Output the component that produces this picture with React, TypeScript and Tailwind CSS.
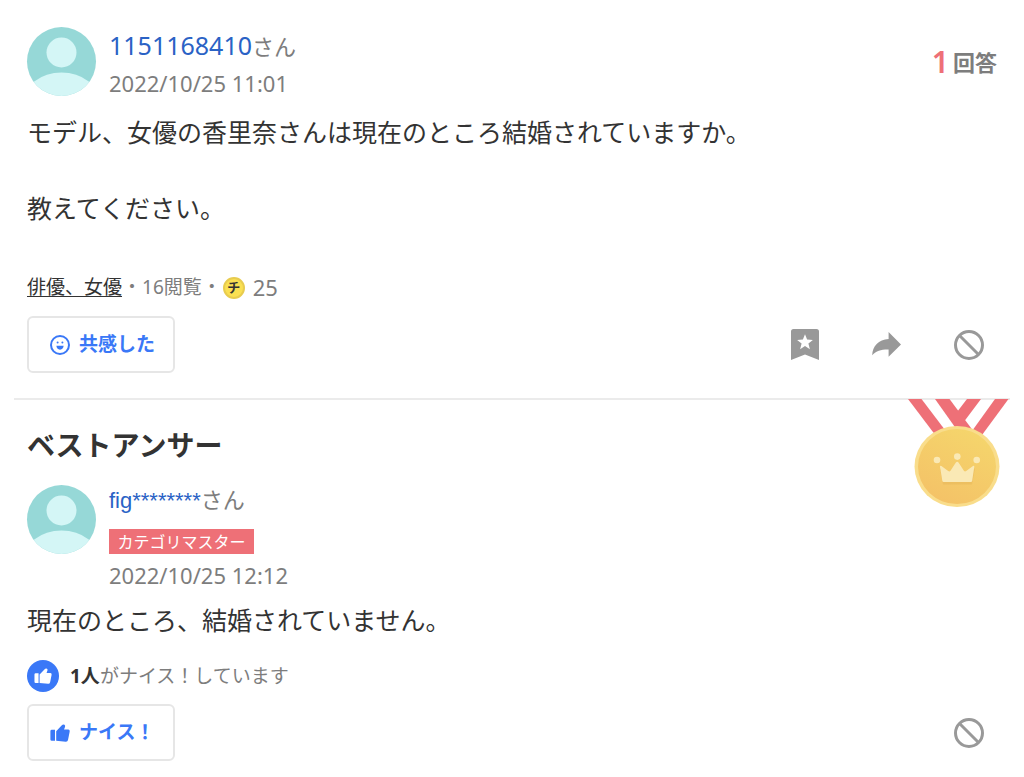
import type { ReactNode } from "react";

const question = {
  user: "1151168410",
  date: "2022/10/25 11:01",
  text: "モデル、女優の香里奈さんは現在のところ結婚されていますか。\n\n教えてください。",
  category: "俳優、女優",
  coins: 25,
};

const answer = {
  user: "fig********",
  badge: "カテゴリマスター",
  date: "2022/10/25 12:12",
  text: "現在のところ、結婚されていません。",
};

function Avatar() {
  return (
    <svg viewBox="0 0 69 69" className="size-[69px] shrink-0 rounded-full bg-[#96d8d7]" fill="#d4f6f6" aria-hidden="true">
      <circle cx="34.5" cy="25.5" r="15" />
      <ellipse cx="34.5" cy="75" rx="38" ry="29.5" />
    </svg>
  );
}

function SmileIcon() {
  return (
    <svg viewBox="0 0 20 20" className="size-5" aria-hidden="true">
      <circle cx="10" cy="10" r="9" fill="none" stroke="currentColor" strokeWidth="2" />
      <circle cx="7.6" cy="7.4" r="1" fill="currentColor" />
      <circle cx="12.4" cy="7.4" r="1" fill="currentColor" />
      <path d="M6.4 10.8h7.2c0 2.2-1.5 3.9-3.6 3.9s-3.6-1.7-3.6-3.9z" fill="currentColor" />
    </svg>
  );
}

function ThumbIcon({ className }: { className: string }) {
  return (
    <svg viewBox="0 0 20 18" className={className} fill="currentColor" aria-hidden="true">
      <path d="M1.8 5.8H5v11H1.8Q.4 16.8.4 15.4V7.2q0-1.4 1.4-1.4z" />
      <path d="M6.2 7.2 11.6 1.6Q13 0 14.5.8q1 .7.5 2.1l-1 2.6h4.3q1.7.2 1.4 2l-1.7 8.5q-.4 1.8-2.2 1.7L6.2 16.8z" />
    </svg>
  );
}

function BookmarkIcon() {
  return (
    <svg viewBox="0 0 28 31" className="h-[31px] w-7" aria-hidden="true">
      <path d="M2.5 0h23Q28 0 28 2.5V31l-14-5.5L0 31V2.5Q0 0 2.5 0z" fill="currentColor" />
      <path d="m14 5.2 2.1 5.4 5.8.3-4.5 3.7 1.5 5.6-4.9-3.2-4.9 3.2 1.5-5.6-4.5-3.7 5.8-.3z" fill="#fff" />
    </svg>
  );
}

function ShareIcon() {
  return (
    <svg viewBox="0 0 29 25" className="h-[25px] w-[29px]" fill="currentColor" aria-hidden="true">
      <path d="M16.6 0 29 12.4 16.6 24.8v-7.4C9.6 17.2 4.4 18.6.2 23.2.4 14 6.6 7.4 16.6 6.9z" />
    </svg>
  );
}

function BanIcon() {
  return (
    <svg viewBox="0 0 30 30" className="size-[30px]" fill="none" stroke="currentColor" strokeWidth="3" aria-hidden="true">
      <circle cx="15" cy="15" r="13.5" />
      <path d="m5.5 5.5 19 19" />
    </svg>
  );
}

function Medal() {
  return (
    <svg viewBox="0 0 102 109" className="absolute -top-px right-px h-[109px] w-[102px]" aria-hidden="true">
      <defs>
        <linearGradient id="gold" x1="0.8" y1="0" x2="0.3" y2="1">
          <stop offset="0" stopColor="#f5d66c" />
          <stop offset="1" stopColor="#f4c267" />
        </linearGradient>
      </defs>
      <g fill="#ee7077">
        <path d="M1 0h13.5L38 31l-9 6z" />
        <path d="M60 0h14L57.5 22 50 13z" />
        <path d="M28 0h14.5L67 33l-17-2z" />
        <path d="M88 0h13.5L75 36l-10-4z" />
      </g>
      <ellipse cx="50" cy="67.5" rx="42.5" ry="40.5" fill="#f9dd8b" />
      <ellipse cx="50" cy="67.5" rx="39" ry="37.5" fill="url(#gold)" />
      <path d="M33 69.5 43 75l7-9.5 7.5 9.500L68 69.500l-3 16H36z" fill="#e5b357" opacity=".45" />
      <g fill="#fae9b5">
        <path d="M33 67.8q.1-1.6 1.4-.7l6.8 5q1.400 1 2.300-.4l5.200-8q1.500-2 3 0l5.200 8q.9 1.400 2.300.4l6.800-5q1.400-.8 1.300.7l-2.100 14q-.2 1.200-1.400 1.200H36.700q-1.200 0-1.400-1.200z" />
        <circle cx="30" cy="61" r="3.3" />
        <circle cx="50.3" cy="57.6" r="3.3" />
        <circle cx="69.7" cy="61" r="3.3" />
      </g>
    </svg>
  );
}

function OutlineButton({ children }: { children: ReactNode }) {
  return (
    <button
      type="button"
      className="flex h-[57px] w-[148px] items-center gap-[9px] rounded-md border-2 border-[#e6e6e6] bg-white pl-[21px] text-[19px] font-bold text-[#3a78f7] hover:bg-gray-50"
    >
      {children}
    </button>
  );
}

export default function App() {
  return (
    <main
      lang="ja"
      className="bg-white px-[14px] pb-4 font-['Noto_Sans','Noto_Sans_CJK_JP',sans-serif] text-[#333333]"
    >
      <article className="px-[13px] pt-[27px] pb-[25px]">
        <header className="flex items-start gap-[13px]">
          <Avatar />
          <div className="flex-1 text-[#7d7d7d]">
            <p className="text-[22px] leading-[37px]">
              <a href="#user" className="text-[25px] text-[#2a62c5]">{question.user}</a>
              さん
            </p>
            <p className="text-[22px] leading-[37px]">{question.date}</p>
          </div>
          <p className="mt-4 flex items-center gap-1 text-[22px] leading-[38px] font-bold text-[#7d7d7d]">
            <span className="text-[30px] font-semibold text-[#ee7077]">1</span>
            回答
          </p>
        </header>

        <p className="mt-[11px] text-[25px] leading-[38px] whitespace-pre-line">{question.text}</p>

        <div className="mt-12 flex h-[25px] items-center text-[19px] text-[#7d7d7d]">
          <a href="#category" className="text-[#333333] underline underline-offset-2">{question.category}</a>
          <span className="w-5 text-center">・</span>
          <span>16閲覧</span>
          <span className="w-5 text-center">・</span>
          <span className="ml-px flex size-[22px] items-center justify-center rounded-full border-2 border-[#e8cc4f] bg-[#fae052] text-[13px] leading-none font-bold text-[#333333]">
            チ
          </span>
          <span className="ml-2 text-[22px]">{question.coins}</span>
        </div>

        <div className="mt-4 flex items-center justify-between">
          <OutlineButton>
            <SmileIcon />
            共感した
          </OutlineButton>
          <div className="flex items-center gap-[53px] pr-[13px] text-[#999999]">
            <button type="button" aria-label="知恵コレクションに追加">
              <BookmarkIcon />
            </button>
            <button type="button" aria-label="共有">
              <ShareIcon />
            </button>
            <button type="button" aria-label="違反報告">
              <BanIcon />
            </button>
          </div>
        </div>
      </article>

      <article className="relative border-t-2 border-[#ebebeb] px-[13px] pt-[26px]">
        <Medal />
        <h2 className="text-[28px] leading-[38px] font-bold">ベストアンサー</h2>

        <header className="mt-[21px] flex items-start gap-[13px]">
          <Avatar />
          <div className="text-[#7d7d7d]">
            <p className="text-[22px] leading-[28px]">
              <a href="#user" className="font-['Liberation_Sans',sans-serif] text-[#2a62c5]">{answer.user}</a>
              さん
            </p>
            <p className="mt-[14px] flex h-[25px] w-[145px] items-center justify-center bg-[#ee7077] text-[16px] text-white">
              {answer.badge}
            </p>
            <p className="mt-[7px] text-[22px] leading-[28px]">{answer.date}</p>
          </div>
        </header>

        <p className="mt-3 text-[25px] leading-[38px]">{answer.text}</p>

        <div className="mt-[21px] flex items-center gap-[11px]">
          <span className="flex size-8 items-center justify-center rounded-full bg-[#3a78f7] text-white">
            <ThumbIcon className="h-4 w-[18px]" />
          </span>
          <p className="text-[19px] leading-8 text-[#7d7d7d]">
            <strong className="font-bold text-[#333333]">1人</strong>がナイス！しています
          </p>
        </div>

        <div className="mt-3 flex items-center justify-between">
          <OutlineButton>
            <ThumbIcon className="h-[18px] w-5" />
            ナイス！
          </OutlineButton>
          <button type="button" aria-label="違反報告" className="mr-[13px] text-[#999999]">
            <BanIcon />
          </button>
        </div>
      </article>
    </main>
  );
}
